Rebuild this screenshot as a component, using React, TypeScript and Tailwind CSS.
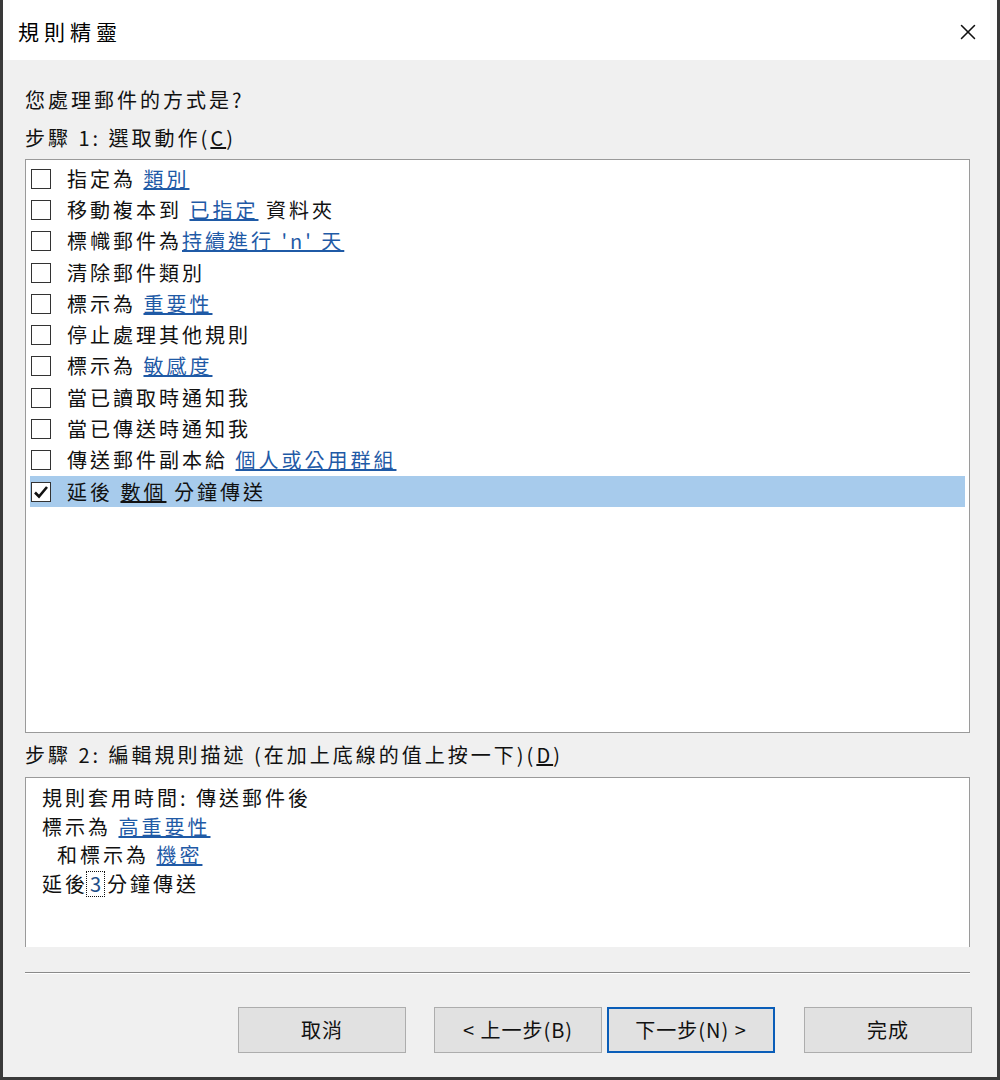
import { X } from "lucide-react";

const font = { fontFamily: '"Noto Sans CJK TC", "Noto Sans", sans-serif' };

interface ActionRow {
    text: string,
    link?: string,
    after?: string,
    checked?: boolean
}

const actions: ActionRow[] = [
    { text: "指定為 ", link: "類別" },
    { text: "移動複本到 ", link: "已指定", after: " 資料夾" },
    { text: "標幟郵件為", link: "持續進行 'n' 天" },
    { text: "清除郵件類別" },
    { text: "標示為 ", link: "重要性" },
    { text: "停止處理其他規則" },
    { text: "標示為 ", link: "敏感度" },
    { text: "當已讀取時通知我" },
    { text: "當已傳送時通知我" },
    { text: "傳送郵件副本給 ", link: "個人或公用群組" },
    { text: "延後 ", link: "數個", after: " 分鐘傳送", checked: true },
]

function Checkbox({ checked }: { checked?: boolean }) {
    return (
        <div className="w-[20px] h-[20px] border-[1.5px] border-[#333333] bg-white flex items-center justify-center shrink-0">
            {checked ? (
                <svg width="16" height="16" viewBox="0 0 16 16">
                    <path d="M2 8.5 L6 12.5 L14 3" fill="none" stroke="#111" strokeWidth="2.6" />
                </svg>
            ) : <></>}
        </div>
    )
}

function Button({ label, primary }: { label: string, primary?: boolean }) {
    return (
        <div className={"w-[168px] h-[46px] flex items-center justify-center text-[20px] tracking-[1px] text-[#111] bg-[#e1e1e1] " +
            (primary ? "border-2 border-[#0a5db8]" : "border border-[#adadad]")}>
            {label}
        </div>
    )
}

export default function App() {
    return (
        <div style={font} className="w-[1000px] h-[1080px] bg-[#3a3a3a] pl-[3px] pr-[3px] pb-[3px]">
            <div className="h-full bg-[#f0f0f0] flex flex-col">
                <div className="h-[60px] bg-white flex items-center justify-between pl-[15px] pr-[16px] pt-[3px] shrink-0">
                    <span className="text-[21px] tracking-[5px] text-black">規則精靈</span>
                    <X size={26} strokeWidth={1.4} color="#111" />
                </div>

                <div className="pl-[22px] pr-[27px] pt-[26px] text-[20px] tracking-[3px] text-[#111]">
                    <div className="leading-[28px]">您處理郵件的方式是?</div>
                    <div className="leading-[28px] mt-[10px]">步驟 1: 選取動作(<span className="underline">C</span>)</div>

                    <div className="mt-[7px] h-[574px] bg-white border border-[#9a9a9a] pt-[3px] px-[4px]">
                        {actions.map((item, index) => {
                            return (
                                <div key={index + "action"}
                                    className={"h-[31.3px] flex items-center pl-[1px] " + (item.checked ? "bg-[#a7cbec]" : "")}>
                                    <Checkbox checked={item.checked} />
                                    <span className="ml-[16px] leading-none whitespace-pre">
                                        {item.text}
                                        {item.link ? <span className={item.checked ? "underline text-[#111]" : "underline text-[#1f5aa6]"}>{item.link}</span> : <></>}
                                        {item.after}
                                    </span>
                                </div>
                            )
                        })}
                    </div>

                    <div className="leading-[28px] mt-[8px]">步驟 2: 編輯規則描述 (在加上底線的值上按一下)(<span className="underline">D</span>)</div>

                    <div className="mt-[8px] h-[170px] bg-white border border-[#9a9a9a] border-b-0 pl-[16px] pt-[6px] leading-[28.7px] whitespace-pre">
                        <div>規則套用時間: 傳送郵件後</div>
                        <div>標示為 <span className="underline text-[#1f5aa6]">高重要性</span></div>
                        <div>  和標示為 <span className="underline text-[#1f5aa6]">機密</span></div>
                        <div className="flex items-center">
                            <span>延後</span>
                            <span className="inline-block border border-dotted border-[#111] h-[26px] leading-[24px] pl-[3px] pr-[0px] text-[#1f4f8a] -ml-[2px] mr-[2px]">3</span>
                            <span>分鐘傳送</span>
                        </div>
                    </div>

                    <div className="mt-[25px] border-t border-[#8a8a8a] border-b border-b-white"></div>

                    <div className="flex justify-end mt-[33px] -mr-[2px]">
                        <Button label="取消" />
                        <div className="ml-[28px]"><Button label="< 上一步(B)" /></div>
                        <div className="ml-[5px]"><Button label="下一步(N) >" primary /></div>
                        <div className="ml-[29px]"><Button label="完成" /></div>
                    </div>
                </div>
            </div>
        </div>
    )
}
